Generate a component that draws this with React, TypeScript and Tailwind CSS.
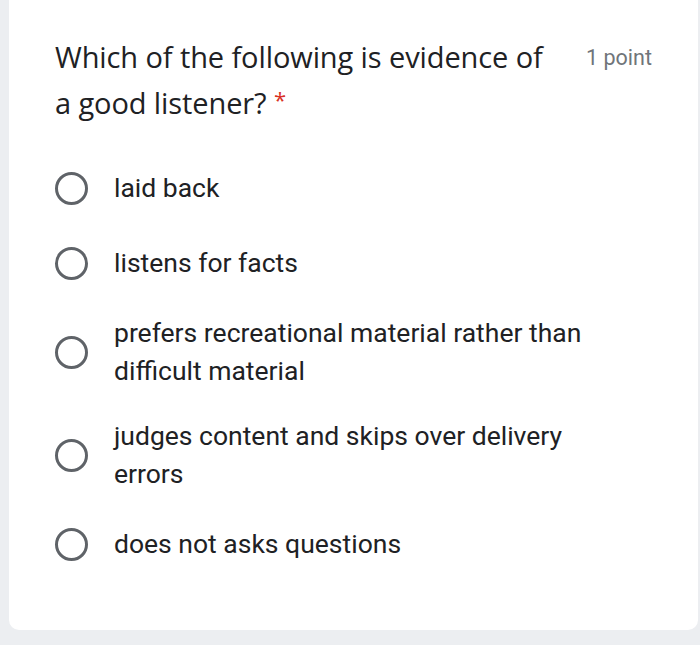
import React from 'react';

const options = [
  'laid back',
  'listens for facts',
  'prefers recreational material rather than difficult material',
  'judges content and skips over delivery errors',
  'does not asks questions',
];

function Radio() {
  return (
    <span className="shrink-0 w-[33px] h-[33px] rounded-full border-[3px] border-[#5f6368] box-border" />
  );
}

export default function App() {
  return (
    <div className="w-[700px] h-[645px] bg-[#eceef1] pl-[9px] pr-[2px] pb-[15px] font-['Roboto',sans-serif]">
      <div className="h-full bg-white rounded-b-[10px] pl-[46px] pr-[46px] pt-[35px]">
        <div className="flex justify-between items-start">
          <h2 className="w-[505px] text-[29px] leading-[43px] text-[#202124] font-['Open_Sans',sans-serif] tracking-[-0.1px]">
            Which of the following is evidence of a good listener?{' '}
            <span className="text-[22px] align-[6px] text-[#d93025]">*</span>
          </h2>
          <span className="text-[21.5px] leading-[28px] text-[#70757a] mt-[9px] whitespace-nowrap">1 point</span>
        </div>
        <div className="mt-[40px] flex flex-col gap-[27px]">
          {options.map((o) => (
            <label key={o} className="flex items-center gap-[26px] min-h-[48px]">
              <Radio />
              <span className="w-[490px] text-[26.5px] leading-[38px] text-[#202124]">{o}</span>
            </label>
          ))}
        </div>
      </div>
    </div>
  );
}
